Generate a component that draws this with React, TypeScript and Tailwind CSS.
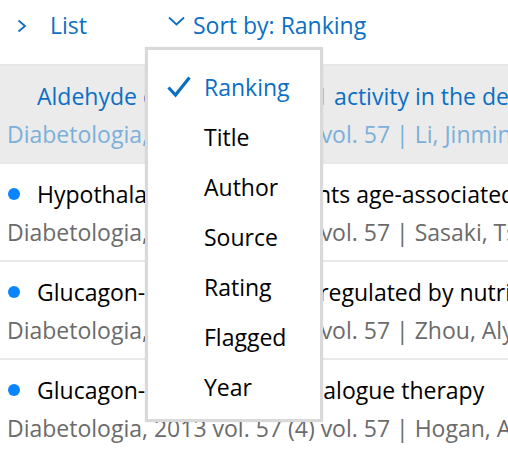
import React from 'react';

type Paper = {
  id: number;
  title: string;
  source: string;
  unread: boolean;
  selected?: boolean;
};

const papers: Paper[] = [
  {
    id: 1,
    title: 'Aldehyde dehydrogenase 1 activity in the developing human pancreas',
    source: 'Diabetologia, 2014 vol. 57 (4) vol. 57 | Li, Jinming; Feng, Zhi',
    unread: false,
    selected: true,
  },
  {
    id: 2,
    title: 'Hypothalamic SIRT1 prevents age-associated weight gain',
    source: 'Diabetologia, 2014 vol. 57 (4) vol. 57 | Sasaki, Tsutomu',
    unread: true,
  },
  {
    id: 3,
    title: 'Glucagon-like peptide-1 is regulated by nutrition',
    source: 'Diabetologia, 2014 vol. 57 (4) vol. 57 | Zhou, Alysha',
    unread: true,
  },
  {
    id: 4,
    title: 'Glucagon-like peptide-1 analogue therapy',
    source: 'Diabetologia, 2013 vol. 57 (4) vol. 57 | Hogan, Andrew',
    unread: true,
  },
];

const sortOptions = ['Ranking', 'Title', 'Author', 'Source', 'Rating', 'Flagged', 'Year'];

export default function App() {
  const current = 'Ranking';

  return (
    <div
      className="relative w-[508px] h-[450px] overflow-hidden bg-white"
      style={{ fontFamily: '"Open Sans", "Noto Sans", sans-serif' }}
    >
      {/* toolbar */}
      <div className="flex items-start h-[64px] pt-[10px] text-[23px] leading-[30px] text-[#0b6fc4]">
        <div className="flex items-center pl-[17px] w-[168px]">
          <svg width="10" height="14" viewBox="0 0 10 14" className="mt-[1px]">
            <path d="M1.5 1.5 L8 7 L1.5 12.5" fill="none" stroke="currentColor" strokeWidth="1.8" />
          </svg>
          <span className="ml-[23px]">List</span>
        </div>
        <div className="flex items-center">
          <svg width="17" height="10" viewBox="0 0 17 10" className="mb-[9px]">
            <path d="M1 1.5 L8.5 8.5 L16 1.5" fill="none" stroke="currentColor" strokeWidth="1.8" />
          </svg>
          <span className="ml-[8px]">Sort by: Ranking</span>
        </div>
      </div>
      <div className="h-[2px] bg-[#e6e6e6]" />

      {/* list */}
      <div>
        {papers.map((p) => (
          <div
            key={p.id}
            className={
              'h-[98px] pt-[11px] border-b-2 border-[#e9e9e9] whitespace-nowrap text-[23px] leading-[38px] ' +
              (p.selected ? 'bg-[#ebebeb]' : 'bg-white')
            }
          >
            <div className="flex items-center pl-[8px]">
              {p.unread ? (
                <span className="w-[12px] h-[12px] rounded-full bg-[#0a84ff] shrink-0" />
              ) : (
                <span className="w-[12px] h-[12px] shrink-0" />
              )}
              <span className={'ml-[17px] ' + (p.selected ? 'text-[#0b6fc4]' : 'text-black')}>
                {p.title}
              </span>
            </div>
            <div className={'pl-[7px] ' + (p.selected ? 'text-[#7bb0da]' : 'text-[#6b6b6b]')}>
              {p.source}
            </div>
          </div>
        ))}
      </div>

      {/* sort dropdown */}
      <div className="absolute left-[145px] top-[47px] w-[178px] h-[375px] bg-white border-[3px] border-[#d9d9d9] shadow-[0_0_2px_rgba(0,0,0,0.08)]">
        <ul className="pt-[12px] text-[23px]">
          {sortOptions.map((opt) => (
            <li
              key={opt}
              className={
                'relative h-[50px] leading-[50px] pl-[56px] ' +
                (opt === current ? 'text-[#0b6fc4]' : 'text-black')
              }
            >
              {opt === current && (
                <svg
                  width="24"
                  height="24"
                  viewBox="0 0 24 24"
                  className="absolute left-[19px] top-[13px]"
                >
                  <path d="M1.5 12.5 L8.5 20 L22.5 2.5" fill="none" stroke="#0b6fc4" strokeWidth="3.2" />
                </svg>
              )}
              {opt}
            </li>
          ))}
        </ul>
      </div>
    </div>
  );
}
